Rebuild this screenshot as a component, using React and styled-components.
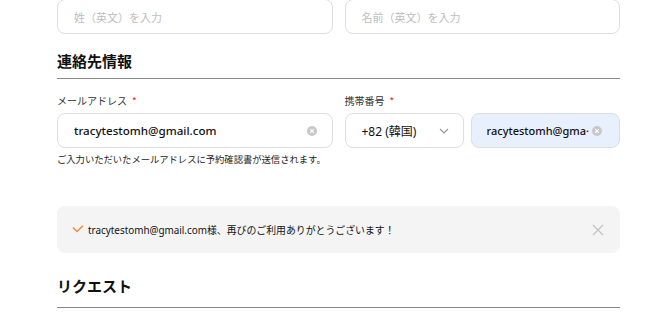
import React from "react";
import styled, { createGlobalStyle } from "styled-components";

const Global = createGlobalStyle`
  html, body { margin: 0; padding: 0; background: #fff; }
  body { font-family: "Noto Sans", "Noto Sans CJK JP", sans-serif; color: #111; overflow: hidden; }
  * { box-sizing: border-box; }
`;

const Page = styled.div`
  width: 668px;
  height: 318px;
  padding: 0 48px 0 57px;
  display: flex;
  flex-direction: column;
`;

const Row = styled.div`
  display: flex;
  gap: ${(p) => p.$gap || 12}px;
  margin-top: ${(p) => p.$mt || 0}px;
`;

const Field = styled.div`
  flex: ${(p) => (p.$w ? `0 0 ${p.$w}px` : p.$block ? "0 0 auto" : "1 1 0")};
  height: 35px;
  border: 1px solid #dedede;
  border-radius: 8px;
  background: ${(p) => (p.$filled ? "#e8f0fe" : "#fff")};
  display: flex;
  align-items: center;
  padding: 0 ${(p) => (p.$pr ?? 16)}px 0 ${(p) => (p.$pl ?? 16)}px;
  min-width: 0;
  overflow: hidden;
`;

const Placeholder = styled.span`
  font-family: "Noto Sans CJK JP", sans-serif;
  font-size: 11px;
  color: #bdbdbd;
`;

const Value = styled.span`
  font-size: ${(p) => p.$fs || 11.6}px;
  font-weight: 500;
  color: #111;
  flex: 1;
  white-space: nowrap;
  margin-right: ${(p) => p.$mr || 0}px;
  font-family: "Noto Sans", "Noto Sans CJK JP", sans-serif;
`;

const ClearDot = styled.span`
  width: 10px;
  height: 10px;
  border-radius: 50%;
  background: #c8c8c8;
  flex: 0 0 10px;
  display: flex;
  align-items: center;
  justify-content: center;
`;

const SectionTitle = styled.h2`
  margin: ${(p) => p.$mt}px 0 0;
  font-family: "Noto Sans CJK JP", sans-serif;
  font-size: 15px;
  font-weight: 700;
  line-height: 22px;
  padding-bottom: ${(p) => p.$pb}px;
  border-bottom: 1px solid #888;
  color: #111;
`;

const Col = styled.div`
  display: flex;
  flex-direction: column;
  flex: 1 1 0;
  min-width: 0;
`;

const Label = styled.div`
  font-family: "Noto Sans CJK JP", sans-serif;
  font-size: 10px;
  line-height: 14px;
  color: #333;
  margin-bottom: 5px;
`;

const Req = styled.span`
  color: #e0201b;
  margin-left: 5px;
`;

const Help = styled.div`
  font-family: "Noto Sans CJK JP", sans-serif;
  font-size: 9.3px;
  line-height: 12px;
  color: #222;
  margin-top: 5px;
`;

const Notice = styled.div`
  margin-top: 41px;
  height: 47px;
  background: #f4f4f4;
  border-radius: 8px;
  display: flex;
  align-items: center;
  padding: 0 16px 0 15px;
`;

const NoticeText = styled.span`
  flex: 1;
  font-size: 9.9px;
  color: #111;
  margin-left: 4px;
  font-family: "Noto Sans", "Noto Sans CJK JP", sans-serif;
`;

const SelectText = styled.span`
  flex: 1;
  font-size: 12px;
  color: #111;
  font-family: "Noto Sans", "Noto Sans CJK JP", sans-serif;
`;

const Spacer = styled.div`
  flex: 1;
`;

const Clear = () => (
  <ClearDot>
    <svg width="6" height="6" viewBox="0 0 6 6">
      <path d="M1.2 1.2L4.8 4.8M4.8 1.2L1.2 4.8" stroke="#fff" strokeWidth="1.1" />
    </svg>
  </ClearDot>
);

export default function App() {
  return (
    <>
      <Global />
      <Page>
        <Row $mt={-1}>
          <Field>
            <Placeholder>姓（英文）を入力</Placeholder>
          </Field>
          <Field>
            <Placeholder>名前（英文）を入力</Placeholder>
          </Field>
        </Row>

        <SectionTitle $mt={16} $pb={6}>連絡先情報</SectionTitle>

        <Row $mt={15}>
          <Col>
            <Label>
              メールアドレス<Req>*</Req>
            </Label>
            <Field $block $pr={15}>
              <Value>tracytestomh@gmail.com</Value>
              <Clear />
            </Field>
            <Help>ご入力いただいたメールアドレスに予約確認書が送信されます。</Help>
          </Col>
          <Col>
            <Label>
              携帯番号<Req>*</Req>
            </Label>
            <Row $gap={7}>
              <Field $w={119} $pr={14}>
                <SelectText>+82 (韓国)</SelectText>
                <svg width="10" height="6" viewBox="0 0 10 6">
                  <path d="M1 1l4 4 4-4" fill="none" stroke="#999" strokeWidth="1.2" />
                </svg>
              </Field>
              <Field $filled $pl={15} $pr={17}>
                <Value $fs={11} $mr={2}>racytestomh@gma·</Value>
                <Clear />
              </Field>
            </Row>
          </Col>
        </Row>

        <Notice>
          <svg width="12" height="9" viewBox="0 0 12 9">
            <path d="M1 2.5l4 4L11 0.8" fill="none" stroke="#f08a3c" strokeWidth="1.5" />
          </svg>
          <NoticeText>tracytestomh@gmail.com様、再びのご利用ありがとうございます！</NoticeText>
          <svg width="12" height="12" viewBox="0 0 12 12">
            <path d="M1 1l10 10M11 1L1 11" stroke="#c4c4c4" strokeWidth="1.4" />
          </svg>
        </Notice>

        <SectionTitle $mt={22} $pb={10}>リクエスト</SectionTitle>
        <Spacer />
      </Page>
    </>
  );
}
